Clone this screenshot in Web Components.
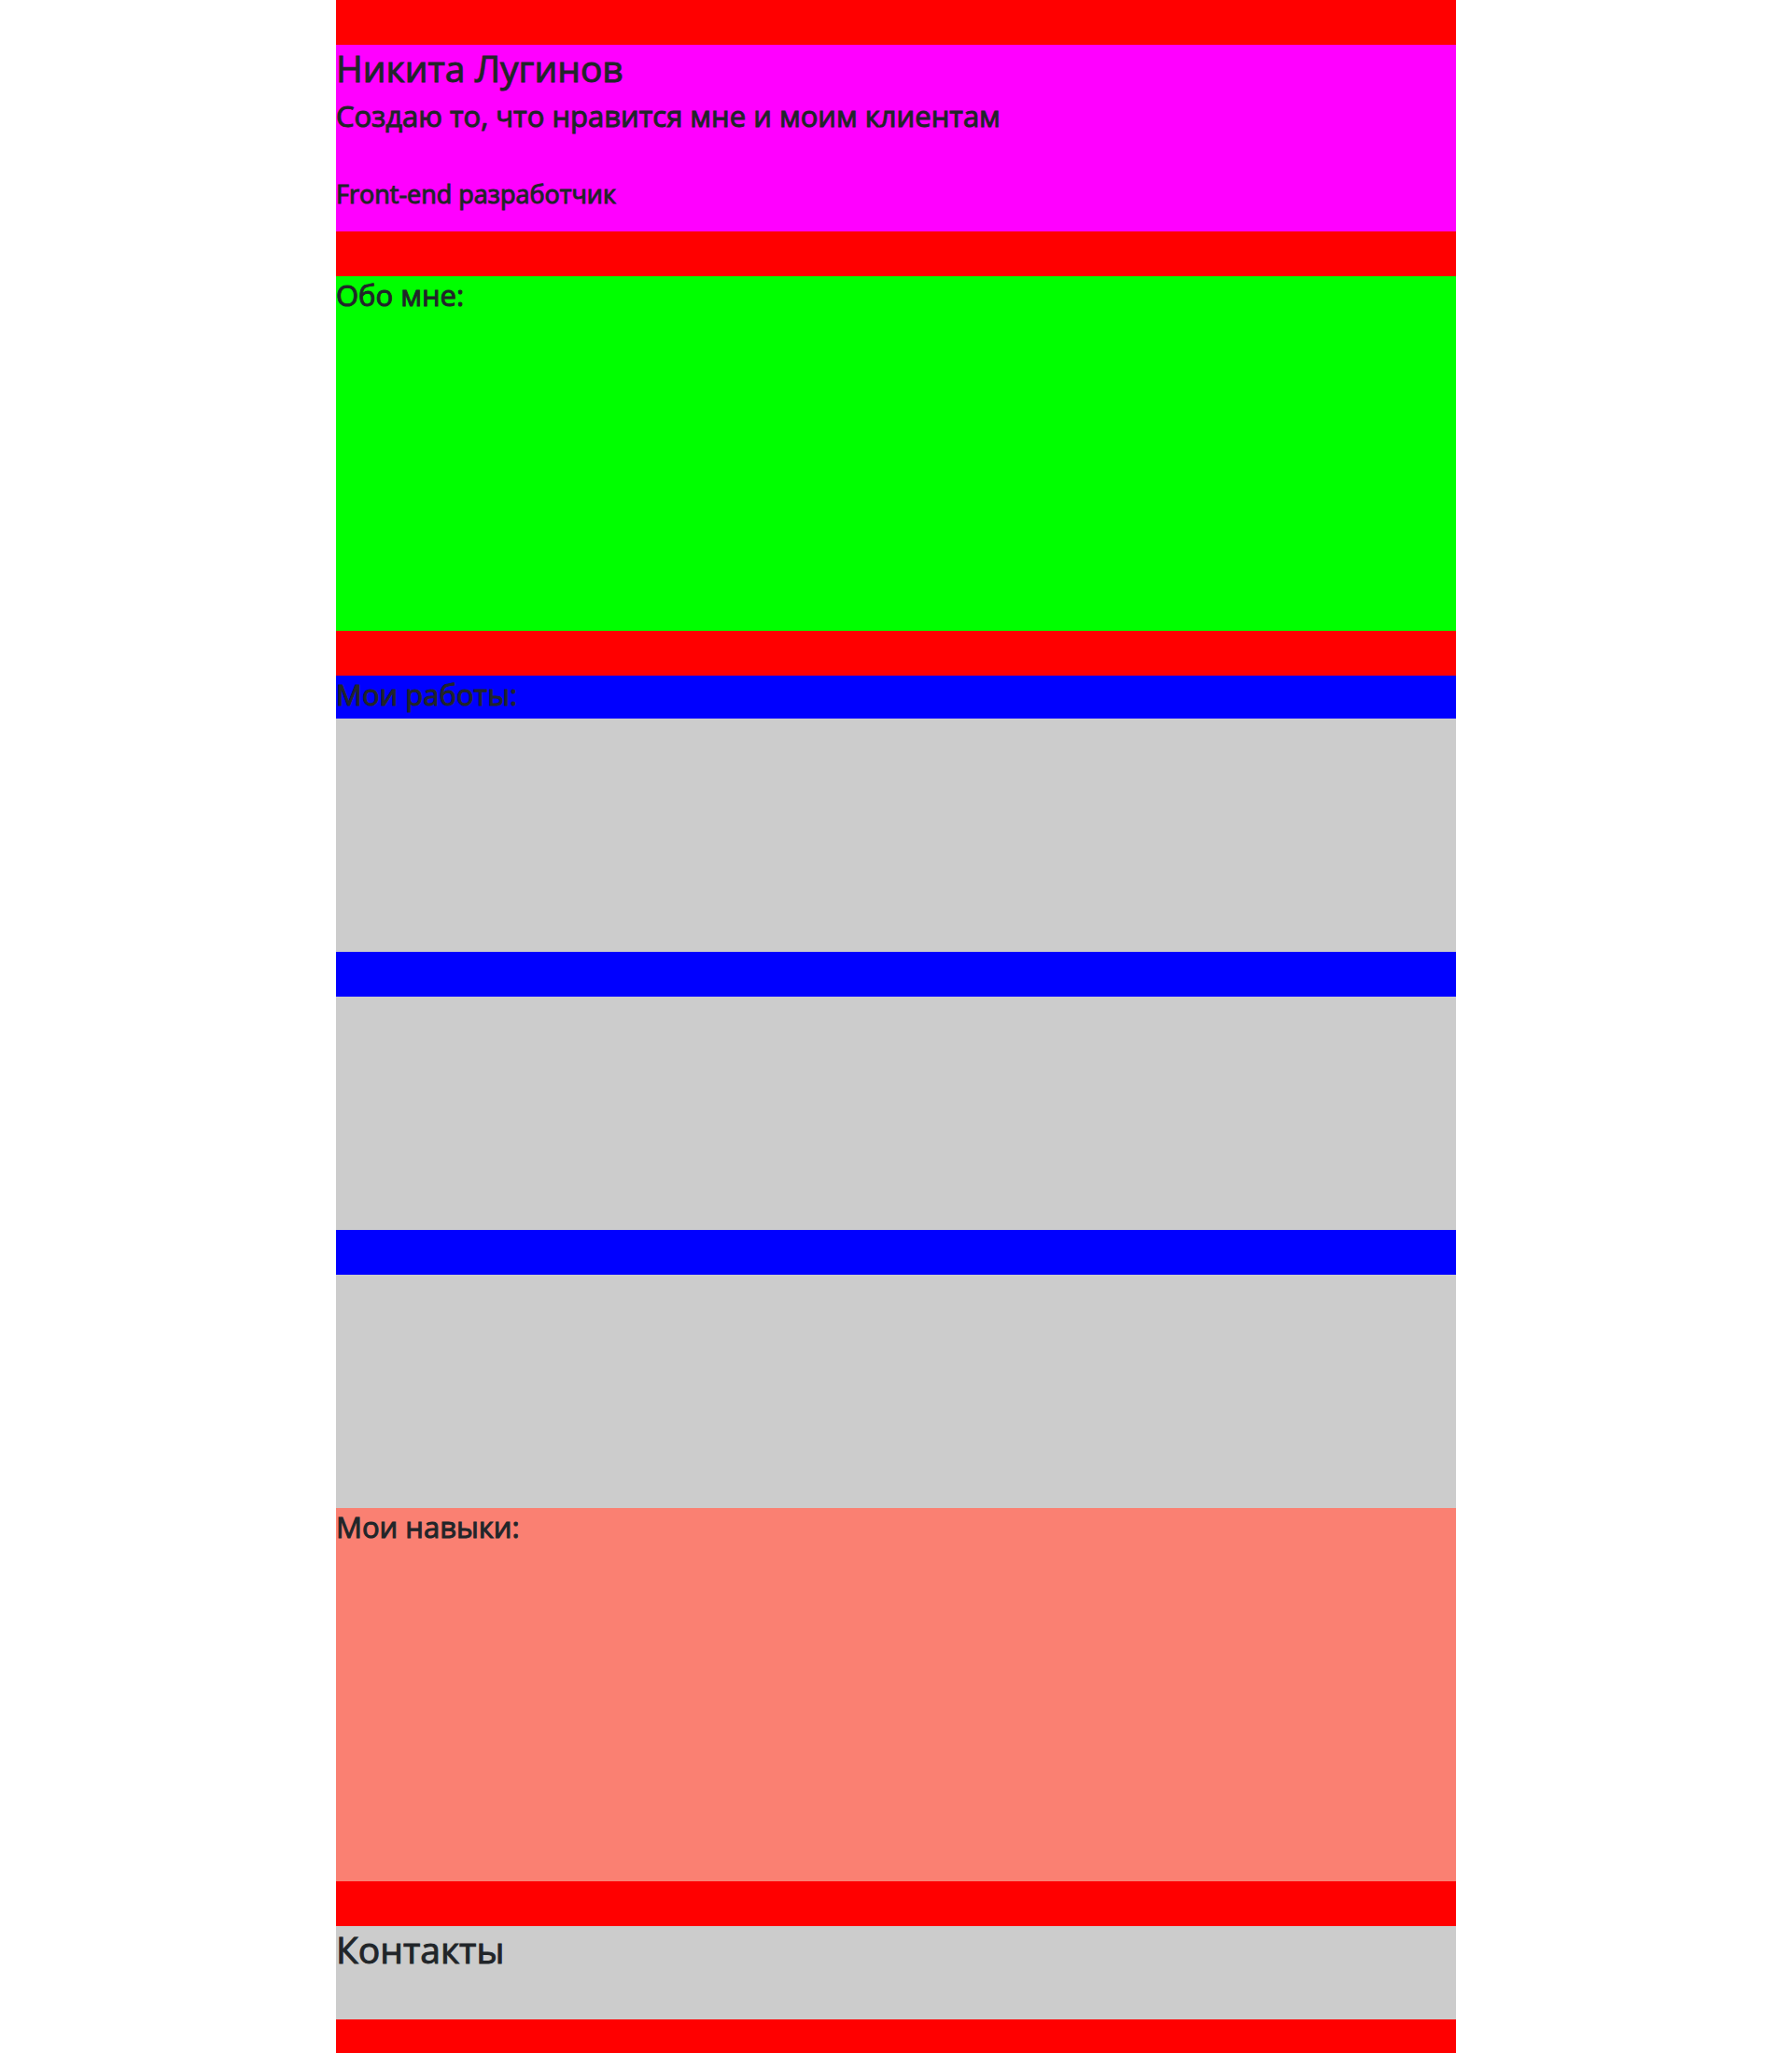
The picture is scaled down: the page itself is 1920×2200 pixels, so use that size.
<!DOCTYPE html>
<html lang="ru">
<head>
<meta charset="utf-8">
<meta name="viewport" content="width=device-width, initial-scale=1">
<title>Никита Лугинов</title>
<style>
body { margin: 0; background: #fff; color: #212529; font-family: "Open Sans", "Noto Sans", sans-serif; font-size: 16px; line-height: 24px; }
</style>
</head>
<body>
<page-container>
  <intro-panel>
    <span slot="name">Никита Лугинов</span>
    <span slot="motto">Создаю то, что нравится мне и моим клиентам</span>
    <span slot="role">Front-end разработчик</span>
  </intro-panel>
  <about-panel>Обо мне:</about-panel>
  <works-panel>
    <span slot="title">Мои работы:</span>
    <work-card></work-card>
    <work-card></work-card>
    <work-card></work-card>
  </works-panel>
  <contacts-panel>Контакты</contacts-panel>
</page-container>
<script>
const headings = `
  h1, h2, h3 { margin: 0 0 6px; font-weight: 500; -webkit-text-stroke: 1px currentColor; }
  h1 { font-size: 39px; line-height: 50px; }
  h2 { font-size: 31px; line-height: 40px; }
  h3 { font-size: 27px; line-height: 36px; }
`;
function define(name, css, html) {
  const template = document.createElement('template');
  template.innerHTML = `<style>:host { display: block; box-sizing: border-box; }${headings}${css}</style>${html}`;
  customElements.define(name, class extends HTMLElement {
    constructor() {
      super();
      this.attachShadow({ mode: 'open' }).append(template.content.cloneNode(true));
    }
  });
}
define('page-container', `
  :host { background: #f00; max-width: 1200px; min-height: 100vh; margin: 0 auto; }
  main { display: flex; flex-direction: column; gap: 48px; padding: 48px 0 36px; }
`, '<main><slot></slot></main>');
define('intro-panel', `
  :host { background: #f0f; min-height: 200px; }
  h2 { margin-bottom: 46px; }
`, '<header><h1><slot name="name"></slot></h1><h2><slot name="motto"></slot></h2><h3><slot name="role"></slot></h3></header>');
define('about-panel', ':host { background: #0f0; min-height: 380px; }', '<section><h2><slot></slot></h2></section>');
define('works-panel', `
  :host { background: #00f; }
  .list { display: flex; flex-direction: column; gap: 48px; }
`, '<section><h2><slot name="title"></slot></h2><div class="list"><slot></slot></div><skills-panel>Мои навыки:</skills-panel></section>');
define('work-card', ':host { background: #ccc; min-height: 250px; }', '<article></article>');
define('skills-panel', ':host { background: salmon; min-height: 400px; }', '<section><h2><slot></slot></h2></section>');
define('contacts-panel', ':host { background: #ccc; min-height: 100px; }', '<footer><h1><slot></slot></h1></footer>');
</script>
</body>
</html>
